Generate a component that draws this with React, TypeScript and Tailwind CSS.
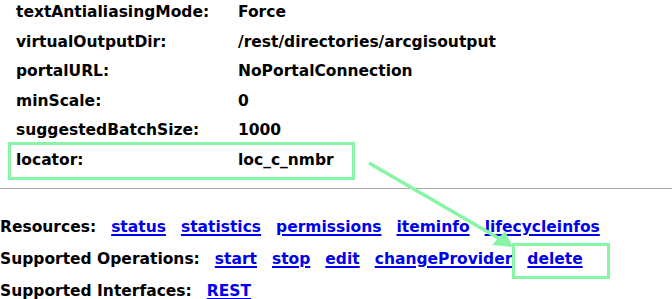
import React from "react";

const rows: [string, string][] = [
  ["textAntialiasingMode:", "Force"],
  ["virtualOutputDir:", "/rest/directories/arcgisoutput"],
  ["portalURL:", "NoPortalConnection"],
  ["minScale:", "0"],
  ["suggestedBatchSize:", "1000"],
  ["locator:", "loc_c_nmbr"],
];

function Link({ children }: { children: React.ReactNode }) {
  return (
    <a href="#" className="text-[#0000ee] underline underline-offset-[2px] decoration-[1.5px]">
      {children}
    </a>
  );
}

export default function App() {
  return (
    <div
      className="relative w-[672px] h-[299px] overflow-hidden bg-white text-black font-bold text-[15.5px] leading-none"
      style={{ fontFamily: '"DejaVu Sans", Verdana, sans-serif' }}
    >
      <div className="-mt-[2px] flex flex-col">
        {rows.map(([k, v]) => (
          <div key={k} className="flex items-center h-[29.6px] pl-[16px]">
            <div className="w-[222px]">{k}</div>
            <div>{v}</div>
          </div>
        ))}
      </div>
      <div className="mt-[12px] border-t border-[#a8a8a8]" />
      <div className="mt-[23px] flex flex-col">
        <div className="flex items-center h-[32px] gap-[15px]">
          <span>Resources:</span>
          <Link>status</Link>
          <Link>statistics</Link>
          <Link>permissions</Link>
          <Link>iteminfo</Link>
          <Link>lifecycleinfos</Link>
        </div>
        <div className="flex items-center h-[32px] gap-[15px]">
          <span>Supported Operations:</span>
          <Link>start</Link>
          <Link>stop</Link>
          <Link>edit</Link>
          <Link>changeProvider</Link>
          <Link>delete</Link>
        </div>
        <div className="flex items-center h-[32px] gap-[15px]">
          <span>Supported Interfaces:</span>
          <Link>REST</Link>
        </div>
      </div>

      {/* annotation overlay */}
      <div className="absolute left-[8px] top-[142px] w-[347px] h-[38px] border-[3px] border-[#88f5a6]" />
      <div className="absolute left-[512px] top-[243px] w-[98px] h-[36px] border-[3px] border-[#88f5a6]" />
      <svg className="absolute left-0 top-0" width="672" height="299">
        <line x1="369" y1="163" x2="500" y2="239" stroke="#88f5a6" strokeWidth="3.5" />
        <polygon points="513,247 492,245 505,231" fill="#88f5a6" />
      </svg>
    </div>
  );
}
